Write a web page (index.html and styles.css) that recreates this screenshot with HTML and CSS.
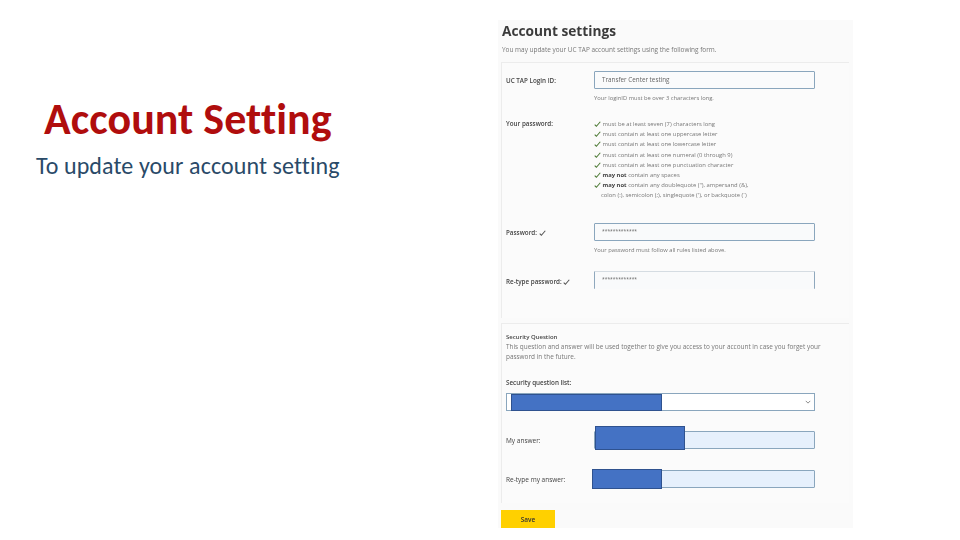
FILE: index.html
```html
<!DOCTYPE html>
<html lang="en">
<head>
<meta charset="utf-8">
<title>Account Setting</title>
<link rel="stylesheet" href="styles.css">
</head>
<body>
<main class="slide">
  <section class="intro">
    <h1 class="intro-title">Account Setting</h1>
    <p class="intro-text">To update your account setting</p>
  </section>
  <section class="shot">
    <h2 class="shot-title">Account settings</h2>
    <p class="shot-lead">You may update your UC TAP account settings using the following form.</p>
    <div class="card card-login">
      <div class="row row-login">
        <div class="label strong">UC TAP Login ID:</div>
        <div class="field">
          <div class="input">Transfer Center testing</div>
          <div class="hint">Your loginID must be over 3 characters long.</div>
        </div>
      </div>
      <div class="row row-rules">
        <div class="label strong">Your password:</div>
        <ul class="rules">
          <li><svg class="check" viewBox="0 0 10 8"><path d="M1 5 L3.4 7.2 L9 .8"/></svg>must be at least seven (7) characters long</li>
          <li><svg class="check" viewBox="0 0 10 8"><path d="M1 5 L3.4 7.2 L9 .8"/></svg>must contain at least one uppercase letter</li>
          <li><svg class="check" viewBox="0 0 10 8"><path d="M1 5 L3.4 7.2 L9 .8"/></svg>must contain at least one lowercase letter</li>
          <li><svg class="check" viewBox="0 0 10 8"><path d="M1 5 L3.4 7.2 L9 .8"/></svg>must contain at least one numeral (0 through 9)</li>
          <li><svg class="check" viewBox="0 0 10 8"><path d="M1 5 L3.4 7.2 L9 .8"/></svg>must contain at least one punctuation character</li>
          <li><svg class="check" viewBox="0 0 10 8"><path d="M1 5 L3.4 7.2 L9 .8"/></svg><b>may not</b> contain any spaces</li>
          <li><svg class="check" viewBox="0 0 10 8"><path d="M1 5 L3.4 7.2 L9 .8"/></svg><b>may not</b> contain any doublequote ("), ampersand (&amp;),</li>
          <li class="rule-cont">colon (:), semicolon (;), singlequote ('), or backquote (`)</li>
        </ul>
      </div>
      <div class="row row-password">
        <div class="label label-centered strong">Password: <svg class="check" viewBox="0 0 10 8"><path d="M1 5 L3.4 7.2 L9 .8"/></svg></div>
        <div class="field">
          <div class="input input-pass">*************</div>
          <div class="hint">Your password must follow all rules listed above.</div>
        </div>
      </div>
      <div class="row row-retype">
        <div class="label label-centered strong">Re-type password: <svg class="check" viewBox="0 0 10 8"><path d="M1 5 L3.4 7.2 L9 .8"/></svg></div>
        <div class="field">
          <div class="input input-pass input-cut">*************</div>
        </div>
      </div>
    </div>
    <div class="card card-security">
      <div class="sec-title strong">Security Question</div>
      <p class="sec-text">This question and answer will be used together to give you access to your account in case you forget your password in the future.</p>
      <div class="label strong list-label">Security question list:</div>
      <div class="select">
        <span class="redact redact-select"></span>
        <svg class="chevron" viewBox="0 0 8 5"><path d="M1 1 L4 4 L7 1"/></svg>
      </div>
      <div class="row row-answer">
        <div class="label label-centered">My answer:</div>
        <div class="field">
          <div class="input input-fill"><span class="redact redact-answer"></span></div>
        </div>
      </div>
      <div class="row row-answer2">
        <div class="label label-centered">Re-type my answer:</div>
        <div class="field">
          <div class="input input-fill"><span class="redact redact-retype"></span></div>
        </div>
      </div>
    </div>
    <button class="save" type="button">Save</button>
  </section>
</main>
</body>
</html>
```
FILE: styles.css
```css
* { box-sizing: border-box; }
html, body { margin: 0; padding: 0; background: #fff; }
.slide { width: 960px; height: 540px; display: flex; overflow: hidden; background: #fff; }

.intro { width: 498px; padding: 94px 0 0 36px; flex: none; font-family: Carlito, Lato, "Open Sans", sans-serif; font-variant-ligatures: none; }
.intro-title { margin: 0 0 0 8px; font-size: 44px; line-height: 50px; font-weight: 700; color: #b00d0d; white-space: nowrap; letter-spacing: .05px; }
.intro-text { margin: 8px 0 0; font-size: 24px; line-height: 28px; color: #2a4a68; white-space: nowrap; letter-spacing: .1px; }

.shot { width: 355px; height: 508px; margin-top: 20px; padding: 3px 0 0 4px; background: #fafafa; flex: none; font-family: "Open Sans", sans-serif; color: #555; font-size: 6px; line-height: 10px; }
.shot > * { filter: blur(.35px); }
.shot-title { margin: 0; font-size: 13.7px; line-height: 16px; font-weight: 700; color: #3b3b3b; }
.shot-lead { margin: 6px 0 0; font-size: 6.45px; line-height: 10px; color: #777; }

.card { width: 348px; margin-left: -1px; background: #fbfbfb; border-top: 1px solid #ececec; border-left: 1px solid #ececec; }
.card-login { height: 256px; margin-top: 7px; padding: 8px 0 0 4px; }
.card-security { height: 180px; margin-top: 5px; padding: 8px 0 0 4px; }

.row { display: flex; width: 309px; }
.label { width: 88px; flex: none; font-size: 6.5px; line-height: 10px; font-weight: 500; color: #444; }
.strong { font-size: 6.3px; font-weight: 600; }
.label-centered { align-self: flex-start; padding-top: 5px; }
.field { flex: 1; min-width: 0; }

.row-login .label { padding-top: 5px; }
.row-rules { margin-top: 16px; }
.row-password { margin-top: 22px; }
.row-retype { margin-top: 16px; }
.row-retype .label-centered { padding-top: 6px; }

.input { height: 18px; padding: 0 7px; font-size: 6.3px; line-height: 16px; color: #666; background: #fafbfc; border: 1px solid #8aa6bd; border-radius: 1px; position: relative; }
.input-pass { font-size: 4.9px; line-height: 15px; background: #f9fafb; }
.input-cut { border-bottom: 0; border-color: #d5dce2 #8fa8bd; }
.input-fill { background: #e6f0fc; }
.hint { margin-top: 4px; font-size: 5.82px; line-height: 10px; color: #777; }

.rules { list-style: none; margin: 0; padding: 0; font-size: 5.85px; line-height: 10.2px; color: #777; }
.rules li { white-space: nowrap; }
.rules b { color: #444; font-weight: 700; }
.rule-cont { padding-left: 7px; }
.check { display: inline-block; width: 7px; height: 6px; margin-right: 1.5px; vertical-align: -1px; fill: none; stroke: #4d7a35; stroke-width: 1.5; }
.label .check { stroke: #555; }

.sec-title { font-size: 6px; line-height: 10px; color: #444; }
.sec-text { margin: 0; width: 322px; font-size: 6.43px; line-height: 10.2px; color: #777; }
.list-label { width: auto; margin-top: 16px; }
.select { position: relative; width: 309px; height: 18px; margin-top: 5px; background: #fff; border: 1px solid #8aa6bd; }
.chevron { position: absolute; top: 6px; right: 3px; width: 6px; height: 4px; fill: none; stroke: #666; stroke-width: 1; }

.row-answer { margin-top: 20px; }
.row-answer2 { margin-top: 21px; }
.row-answer .label-centered, .row-answer2 .label-centered { padding-top: 5px; }

.redact { position: absolute; display: block; background: #4472c4; border: 1.5px solid #2f528f; }
.redact-select { left: 4px; top: 0; width: 151px; height: 17px; }
.redact-answer { left: 0; top: -6px; width: 90px; height: 24px; }
.redact-retype { left: -3px; top: -2px; width: 70px; height: 20px; }

.save { display: block; width: 54px; height: 18px; margin: 7px 0 0 -1px; padding: 0; border: 0; background: #ffd000; color: #333; font-family: "Open Sans", sans-serif; font-size: 6.5px; font-weight: 600; }
```
